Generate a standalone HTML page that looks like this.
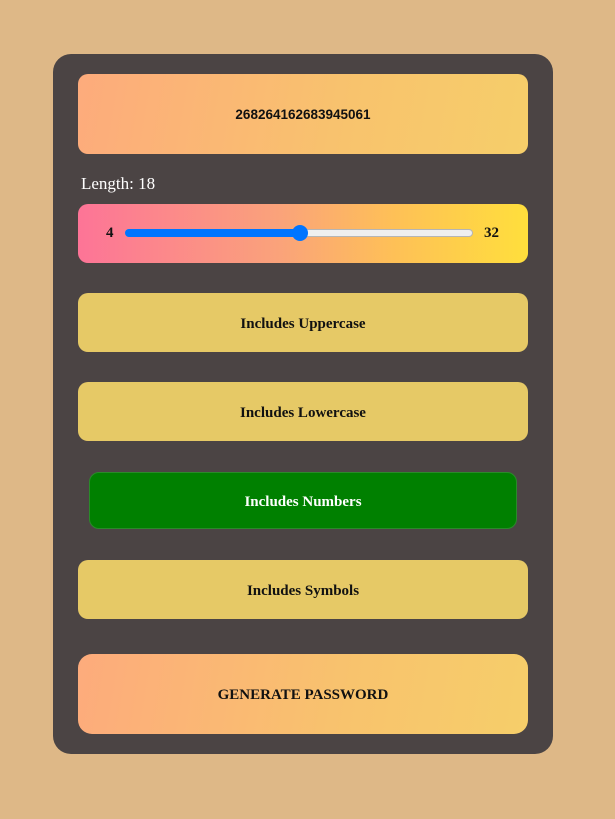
<!DOCTYPE html>
<html><head><style>
*{margin:0;padding:0;box-sizing:border-box}
body{width:615px;height:819px;background:#deb887;position:relative;font-family:"Liberation Serif",serif;overflow:hidden}
.card{position:absolute;left:53px;top:54px;width:500px;height:700px;background:#4b4444;border-radius:18px}
.box{position:absolute;left:78px;width:450px;border-radius:10px;display:flex;align-items:center;justify-content:center;font-weight:bold;font-size:15px;color:#111;padding-top:3px}
.grad{background:linear-gradient(100deg,#fdab7c 0%,#f8c36d 60%,#f6ce6a 100%)}
.y{background:#e6c966}
</style></head><body>
<div class="card"></div>
<div class="box grad" style="top:74px;height:80px;font-family:'Liberation Sans',sans-serif;font-size:13.5px;padding-top:1px">268264162683945061</div>
<div style="position:absolute;left:81px;top:174px;color:#fff;font-size:17px">Length: 18</div>
<div class="box" style="top:204px;height:59px;background:linear-gradient(90deg,#fd7497 0%,#faa37a 45%,#fec057 70%,#ffdf3c 100%);display:block">
 <span style="position:absolute;left:28px;top:21px;font-size:15px">4</span>
 <div style="position:absolute;left:47px;top:25px;width:348px;height:8px;border-radius:4px;background:#efefef;border:1px solid #b5b5b5"></div>
 <div style="position:absolute;left:47px;top:25px;width:174px;height:8px;border-radius:4px;background:#0075ff"></div>
 <div style="position:absolute;left:214px;top:21px;width:16px;height:16px;border-radius:50%;background:#0075ff"></div>
 <span style="position:absolute;left:406px;top:21px;font-size:15px">32</span>
</div>
<div class="box y" style="top:293px;height:59px">Includes Uppercase</div>
<div class="box y" style="top:382px;height:59px">Includes Lowercase</div>
<div class="box" style="left:89px;width:428px;top:472px;height:57px;background:#008000;border:1px solid #2a8a2a;color:#fff">Includes Numbers</div>
<div class="box y" style="top:560px;height:59px">Includes Symbols</div>
<div class="box grad" style="top:654px;height:80px;border-radius:14px">GENERATE PASSWORD</div>
</body></html>
